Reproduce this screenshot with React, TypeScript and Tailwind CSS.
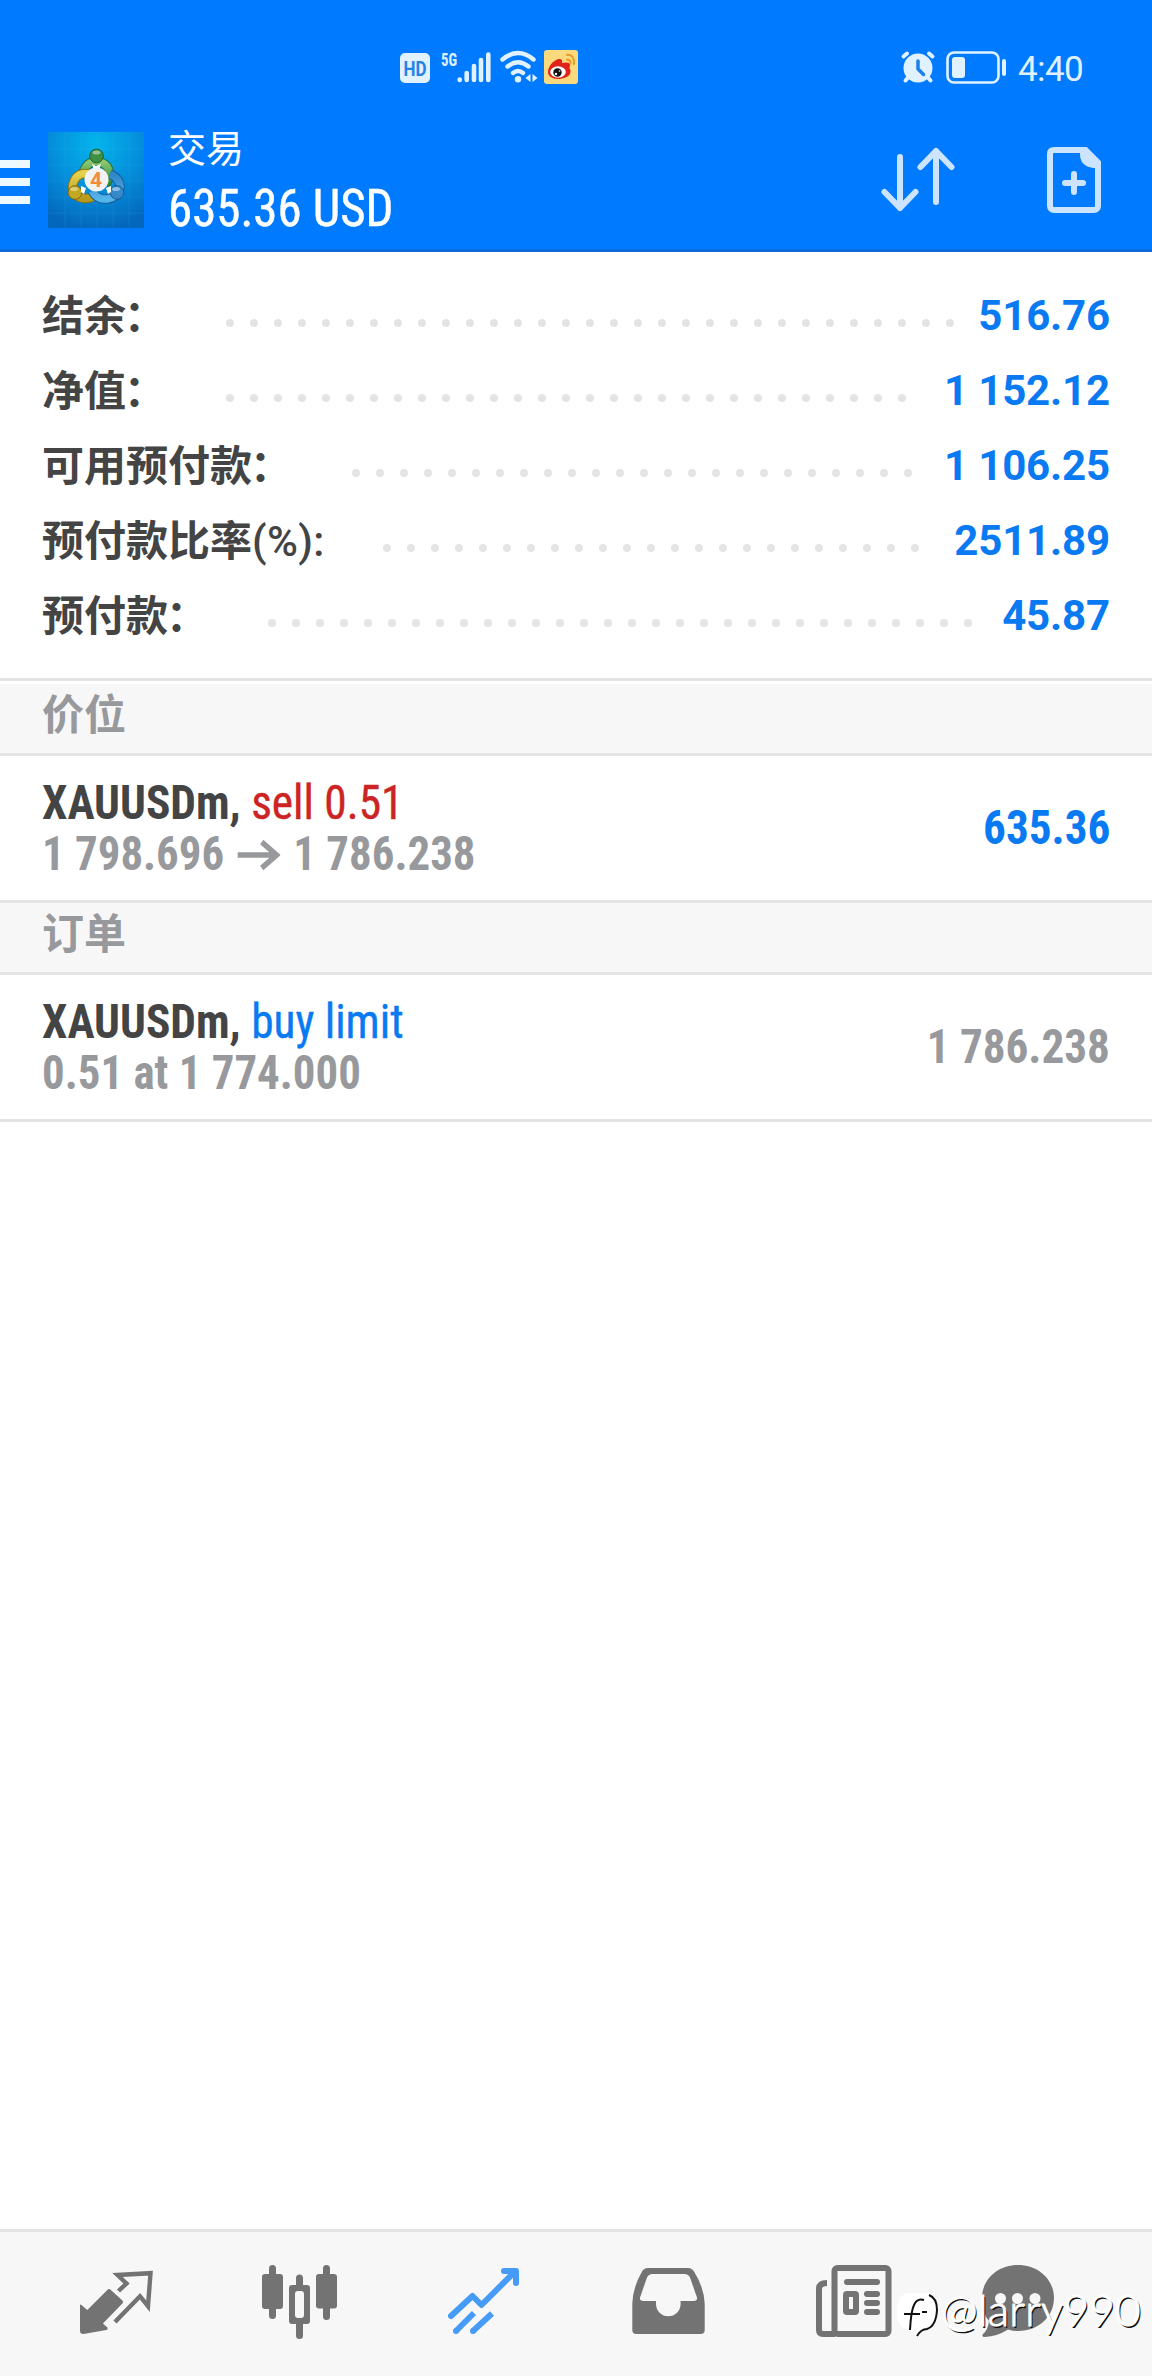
import type { ReactNode } from "react";

const summary = [
  { label: "结余", suffix: "：", value: "516.76", dots: 31, width: "w-[184px]" },
  { label: "净值", suffix: "：", value: "1 152.12", dots: 29, width: "w-[184px]" },
  { label: "可用预付款", suffix: "：", value: "1 106.25", dots: 24, width: "w-[310px]" },
  { label: "预付款比率", suffix: "(%):", value: "2511.89", dots: 23, width: "w-[341px]" },
  { label: "预付款", suffix: "：", value: "45.87", dots: 30, width: "w-[226px]" },
];

function StatusBar() {
  return (
    <div className="h-[117px] flex pt-[46px]">
      <svg className="ml-[396px] w-[190px] h-[40px]" viewBox="396 46 190 40" fill="#e0f1ff">
        <rect x="400" y="53" width="30" height="30" rx="5" />
        <text x="415" y="75.500" textAnchor="middle" textLength="23" lengthAdjust="spacingAndGlyphs" fontSize="20" fontWeight="700" fill="#2482e8" className="font-[Roboto]">HD</text>
        <text x="441" y="65.500" textLength="16" lengthAdjust="spacingAndGlyphs" fontSize="19" fontWeight="700" className="font-['Roboto_Condensed']">5G</text>
        <g stroke="#e0f1ff" strokeWidth="4.600" strokeLinecap="round">
          <path d="M459.700 79.500v.5M466.700 73v7M474 66v14M481 60v20M488.300 54.500V80" />
        </g>
        <g fill="none" stroke="#e0f1ff" strokeWidth="4.400" strokeLinecap="round">
          <path d="M502.500 59.500Q518 46.500 533.500 59.500M507.500 66.500Q518 58 528.500 66.500M513 73Q518 69 523 73" />
        </g>
        <circle cx="518" cy="79.300" r="3.200" />
        <path d="M530.500 74v8l-5-4zM532.500 74v8l5-4z" />
        <rect x="544" y="50" width="34" height="34" rx="3" fill="#fbd97d" />
        <path d="M548 72c0-7 8-14 12-13 3 0 2 4 2 4 4-1 8-1 8 2 0 2-1 3 0 4 3 8-8 10-12 10-6 0-10-3-10-7z" fill="#e2231b" />
        <ellipse cx="558" cy="72" rx="7.800" ry="5.800" fill="#fff" />
        <circle cx="557.500" cy="72.500" r="4.200" fill="#111" />
        <circle cx="556" cy="74" r="1.200" fill="#fff" />
        <circle cx="559.500" cy="71" r=".8" fill="#fff" />
        <path d="M567 55c5-1 8 4 7 9M567 59.500c2.500 0 4 2 3.500 4" fill="none" stroke="#e59b25" strokeWidth="2" strokeLinecap="round" />
      </svg>
      <svg className="ml-[310px] w-[116px] h-[40px]" viewBox="896 46 116 40" fill="none" stroke="#e0f1ff">
        <circle cx="918" cy="68" r="14.500" fill="#e0f1ff" stroke="none" />
        <path d="M903.500 56.500l3.500-3M932.500 56.500l-3.500-3M908.500 77l-3 3.500M927.500 77l3 3.500" strokeWidth="4" strokeLinecap="round" />
        <path d="M918 61v8l5.500 5.500" stroke="#1c80e8" strokeWidth="3.500" strokeLinecap="round" strokeLinejoin="round" />
        <rect x="947.500" y="52.500" width="51" height="30" rx="6.500" strokeWidth="2.600" />
        <rect x="952" y="57" width="13" height="21" rx="3" fill="#e0f1ff" stroke="none" />
        <path d="M1004 61v13" strokeWidth="4" strokeLinecap="round" />
      </svg>
      <span className="ml-[6px] text-[35px] leading-[47px] text-[#e0f1ff] tracking-[-0.6px]">4:40</span>
    </div>
  );
}

function AppLogo() {
  return (
    <svg className="ml-[18px] mt-[15px] size-24" viewBox="0 0 96 96">
      <defs>
        <radialGradient id="sky" cx=".5" cy=".12" r=".9">
          <stop offset="0" stopColor="#04b4ec" />
          <stop offset=".5" stopColor="#0490dc" />
          <stop offset="1" stopColor="#0467bb" />
        </radialGradient>
        <linearGradient id="green" x2="0" y2="1">
          <stop offset="0" stopColor="#8cc872" />
          <stop offset="1" stopColor="#2d8530" />
        </linearGradient>
        <linearGradient id="gold" x2="0" y2="1">
          <stop offset="0" stopColor="#e5d14c" />
          <stop offset="1" stopColor="#b89a1b" />
        </linearGradient>
        <linearGradient id="blue" x2="0" y2="1">
          <stop offset="0" stopColor="#2f86c8" />
          <stop offset="1" stopColor="#54b5ea" />
        </linearGradient>
      </defs>
      <rect width="96" height="96" fill="url(#sky)" />
      <path d="M17 0v96M33 0v96M49 0v96M65 0v96M81 0v96M0 17h96M0 33h96M0 49h96M0 65h96M0 81h96" stroke="#5bc4ee" strokeOpacity=".16" strokeWidth=".8" />
      <g fill="none" strokeLinejoin="round">
        <path d="M35.500 44a13 13 0 1 1 26-3q0 6-4 12" stroke="#226c35" strokeWidth="9.500" />
        <path d="M35.500 44a13 13 0 1 1 26-3q0 6-4 12" stroke="url(#green)" strokeWidth="7.500" />
        <path d="M41 42q-9-2-14 5-5 9 0 15 7 7 18 3" stroke="#877319" strokeWidth="9.500" />
        <path d="M41 42q-9-2-14 5-5 9 0 15 7 7 18 3" stroke="url(#gold)" strokeWidth="7.500" />
        <path d="M62 42q10 4 10 13-1 10-13 12-10 1-15-8" stroke="#1b5e9d" strokeWidth="9.500" />
        <path d="M62 42q10 4 10 13-1 10-13 12-10 1-15-8" stroke="url(#blue)" strokeWidth="7.500" />
      </g>
      <circle cx="48.500" cy="24" r="6.800" fill="#3d9140" stroke="#235f2c" />
      <circle cx="27" cy="60.500" r="6.800" fill="#c4a822" stroke="#7f6912" />
      <circle cx="69" cy="60.500" r="6.800" fill="#3389ca" stroke="#1b5a94" />
      <ellipse cx="48.500" cy="20.500" rx="4" ry="2" fill="#fff" fillOpacity=".45" />
      <ellipse cx="26" cy="57" rx="4" ry="2" fill="#fff" fillOpacity=".4" />
      <ellipse cx="68" cy="57" rx="4" ry="2" fill="#fff" fillOpacity=".45" />
      <path d="M44 32l4 2 5-2-2 6h-5zM33 54l5 2-2 6-3-2zM63 54l-5 2 2 6 3-2z" fill="#fff" />
      <circle cx="48.500" cy="47.500" r="12" fill="#f2f2f2" />
      <text x="48" y="55" textAnchor="middle" fontSize="21" fontWeight="700" fill="#f28b3c" className="font-[Roboto]">4</text>
    </svg>
  );
}

function Header() {
  return (
    <header className="h-[252px] bg-[#007aff] border-b-[3px] border-[#0b6bd8]">
      <StatusBar />
      <div className="flex">
        <div className="mt-[43px] flex flex-col gap-[10px]">
          <div className="h-2 w-[30px] bg-[#edf8ff]" />
          <div className="h-2 w-[30px] bg-[#edf8ff]" />
          <div className="h-2 w-[30px] bg-[#edf8ff]" />
        </div>
        <AppLogo />
        <div className="ml-6 w-[680px] pt-[2px] whitespace-nowrap text-white">
          <div className="text-[38px] leading-[60px]">交易</div>
          <div className="origin-left scale-x-[0.94] font-['Roboto_Condensed'] text-[52px] leading-[60px] [-webkit-text-stroke:0.5px_white]">635.36 USD</div>
        </div>
        <svg className="mt-[20px] ml-[30px] w-[80px] h-[80px]" viewBox="878 137 80 80" fill="none" stroke="#cce4ff" strokeWidth="6" strokeLinecap="round" strokeLinejoin="round">
          <path d="M900 157v51M884.500 192l15.500 16 15.500-16M936 202v-51M920.500 167l15.500-16 15.500 16" />
        </svg>
        <svg className="mt-[20px] ml-[86px] w-[64px] h-[80px]" viewBox="1044 137 64 80" fill="none" stroke="#cce4ff">
          <path d="M1054 150h31.500L1098 162.500V206a4 4 0 0 1-4 4h-40a4 4 0 0 1-4-4v-52q0-4 4-4z" strokeWidth="6" />
          <path d="M1080 148h7l14 14v6h-8q-13-2-13-14z" fill="#cce4ff" stroke="none" />
          <path d="M1074 174v18M1065 183h18" strokeWidth="6" strokeLinecap="round" />
        </svg>
      </div>
    </header>
  );
}

function Summary() {
  return (
    <div className="h-[429px] border-b-[3px] border-[#e4e4e4] px-[42px] pt-[26px] text-[42px] font-bold">
      {summary.map((row) => (
        <div key={row.label} className="flex h-[75px] items-center">
          <span className={`${row.width} shrink-0 pt-[2px] whitespace-nowrap text-[#444]`}>
            {row.label}
            <span className={row.suffix === "：" ? "-ml-[2px]" : "font-medium tracking-[0.4px]"}>{row.suffix}</span>
          </span>
          <div className="flex gap-4 pt-[15px]">
            {Array.from({ length: row.dots }, (_, i) => (
              <i key={i} className="size-2 rounded-full bg-[#e4e4e4]" />
            ))}
          </div>
          <span className="ml-auto whitespace-nowrap text-[#0a7af2] tracking-[-0.15px]">{row.value}</span>
        </div>
      ))}
    </div>
  );
}

function SectionTitle({ children }: { children: ReactNode }) {
  return (
    <div className="h-[72px] border-b-[3px] border-[#e4e4e4] bg-[#f7f7f7] px-[42px] text-[42px] leading-[63px] font-bold text-[#97999c]">
      {children}
    </div>
  );
}

function Item({ action, detail, value }: { action: ReactNode; detail: ReactNode; value: ReactNode }) {
  return (
    <div className="flex h-[147px] items-center justify-between border-b-[3px] border-[#e4e4e4] px-[42px] font-['Roboto_Condensed'] text-[48px] leading-[51px] font-bold whitespace-nowrap">
      <div>
        <div className="origin-left scale-x-[0.945] text-[#444]">
          XAUUSDm, <span className="font-normal [-webkit-text-stroke:0.4px_currentColor]">{action}</span>
        </div>
        <div className="flex origin-left scale-x-[0.935] text-[#97999c]">{detail}</div>
      </div>
      <div className="origin-right scale-x-[0.94] pb-[2px]">{value}</div>
    </div>
  );
}

function Arrow() {
  return (
    <svg className="mx-[14px] mt-[9px] h-[36px] w-[46px]" viewBox="0 0 46 36" fill="none" stroke="#97999c" strokeWidth="5.500">
      <path d="M0 18h42M26 5l16 13-16 13" />
    </svg>
  );
}

function TabBar() {
  return (
    <nav className="relative flex h-[147px] border-t-[3px] border-[#e4e4e4] bg-[#f7f7f7] pt-[28px] pl-[74px]">
      <svg className="h-[84px] w-[84px]" viewBox="74 2260 84 84" fill="#737373">
        <path d="M80 2305.500q0-1.500 1.500-.5l5.800 5 20-20q1.800-1.800 3.600 0l11.500 10.500q1.500 1.500 0 3l-19.500 20 4.500 4q1 2-1 2.600l-23 3.800q-3.400 0-3.400-3z" />
        <path d="M118.500 2291l8-7.500-9-8.500 33-1.800-2.500 33-8-10L115 2322" fill="none" stroke="#737373" strokeWidth="4.400" />
      </svg>
      <svg className="ml-[100px] h-[84px] w-[84px]" viewBox="258 2260 84 84" fill="#737373">
        <rect x="262" y="2274" width="21" height="35" rx="3" />
        <rect x="316" y="2274" width="21" height="34.500" rx="3" />
        <path d="M272.500 2268.500v47M326.500 2268.500v48M299.500 2278v10M299.500 2322v13.500" stroke="#737373" strokeWidth="7" strokeLinecap="round" />
        <rect x="289" y="2285" width="21" height="39" rx="3" />
        <rect x="295" y="2291" width="9" height="27" rx="3" fill="#f7f7f7" />
      </svg>
      <svg className="ml-[100px] h-[84px] w-[84px]" viewBox="442 2260 84 84" fill="none" stroke="#469bf7" strokeWidth="6" strokeLinejoin="round">
        <path d="M451 2316l21.500-20 9 9 33-33M504 2271h12v12" strokeLinecap="round" />
        <path d="M456 2331l18-18M473 2331l19-17.500" />
        <path d="M456 2331h.01M473 2331h.01" strokeLinecap="round" />
      </svg>
      <svg className="ml-[100px] h-[84px] w-[84px]" viewBox="626 2260 84 84" fill="#737373">
        <path fillRule="evenodd" d="M648 2268h40q4 0 6 3.500 10 16 10.700 32V2330q0 4-4 4H636.300q-4 0-4-4v-26.500q.5-16 9.700-32 2-3.500 6-3.500zM652.500 2274q-4 0-5.500 3.500l-7 20q-.5 3.500 3.500 3.500H656v3a12.300 12.300 0 0 0 24.600 0v-3h13q4 0 3.400-3.500l-7-20q-1.500-3.500-5.500-3.500z" />
      </svg>
      <svg className="ml-[102px] h-[84px] w-[84px]" viewBox="812 2260 84 84" fill="none" stroke="#737373" strokeWidth="6">
        <path d="M827 2283q-8 0-8 6v41q0 4 4 4h12" />
        <rect x="834.500" y="2268" width="54" height="66" rx="3" />
        <path d="M847 2282h30M867 2294h10M867 2303h10M867 2312h10" strokeLinecap="round" />
        <rect x="846" y="2294" width="10" height="18" rx="1" />
      </svg>
      <svg className="ml-[80px] h-[84px] w-[84px]" viewBox="976 2260 84 84" fill="#737373">
        <path d="M1018 2265c21 0 36 15 36 33s-15 33-36 33q-5 0-10-1.500-11 7-23 7.500-4 0-2-3 5-4 6-13-7-8-7-23c0-18 15-33 36-33z" />
        <circle cx="1000.500" cy="2298.500" r="5.500" fill="#f7f7f7" />
        <circle cx="1017.500" cy="2298.500" r="5.500" fill="#f7f7f7" />
        <circle cx="1035" cy="2298.500" r="5.500" fill="#f7f7f7" />
      </svg>
      <div className="absolute top-[56px] left-[894px] flex items-start whitespace-nowrap">
        <svg className="h-[54px] w-[47px]" viewBox="894 2288 47 54" fill="none">
          <path d="M908 2293h18q11 2 11 16 0 17-10 20-7 1-11 8-3-6-8-7-11-3-11-18 0-17 11-19z" fill="#fff" />
          <path d="M904 2314h16M924 2300q-7-2-10 5-3 6-4 25M927 2312h-5" stroke="#111" strokeWidth="2" />
          <path d="M929 2295q8 3 8 15-1 16-10 19-6 0-10 7" stroke="#111" strokeWidth="2" />
        </svg>
        <span className="-mt-[4px] text-[44px] leading-[50px] font-light text-white tracking-[0.3px] font-[Lato] [-webkit-text-stroke:1px_white] [text-shadow:1.5px_1.5px_0_#111]">@larry990</span>
      </div>
    </nav>
  );
}

export default function App() {
  return (
    <div className="flex h-[2376px] w-[1152px] flex-col overflow-hidden bg-white font-[Roboto,'Noto_Sans_CJK_SC',sans-serif]">
      <Header />
      <Summary />
      <div className="mt-[3px]">
        <SectionTitle>价位</SectionTitle>
      </div>
      <Item
        action={<span className="text-[#cc2424]">sell 0.51</span>}
        detail={<>1 798.696<Arrow />1 786.238</>}
        value={<span className="text-[#0a7af2]">635.36</span>}
      />
      <SectionTitle>订单</SectionTitle>
      <Item
        action={<span className="text-[#0a7af2]">buy limit</span>}
        detail="0.51 at 1 774.000"
        value={<span className="text-[#97999c]">1 786.238</span>}
      />
      <div className="grow" />
      <TabBar />
    </div>
  );
}
